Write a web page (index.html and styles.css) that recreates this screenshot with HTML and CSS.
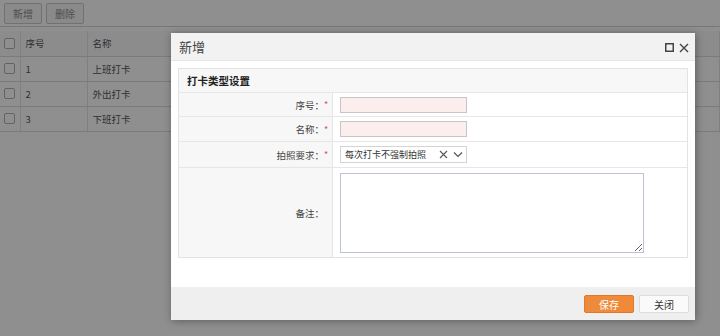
FILE: index.html
```html
<!DOCTYPE html>
<html lang="zh-CN">
<head>
    <meta charset="UTF-8">
    <title>打卡类型</title>
    <link rel="stylesheet" href="styles.css">
</head>
<body>
    <div class="page">
        <div class="toolbar">
            <button class="tool-btn">新增</button>
            <button class="tool-btn">删除</button>
        </div>
        <table class="grid">
            <tr class="grid-head">
                <td class="col-check"><span class="check"></span></td>
                <td class="col-no">序号</td>
                <td>名称</td>
            </tr>
            <tr>
                <td class="col-check"><span class="check"></span></td>
                <td class="col-no">1</td>
                <td>上班打卡</td>
            </tr>
            <tr>
                <td class="col-check"><span class="check"></span></td>
                <td class="col-no">2</td>
                <td>外出打卡</td>
            </tr>
            <tr>
                <td class="col-check"><span class="check"></span></td>
                <td class="col-no">3</td>
                <td>下班打卡</td>
            </tr>
        </table>
    </div>

    <div class="mask"></div>

    <div class="dialog">
        <div class="dialog-head">
            <span class="dialog-title">新增</span>
            <span class="dialog-tools">
                <svg width="9" height="9" viewBox="0 0 9 9"><rect x="0.75" y="0.75" width="7.5" height="7.5" fill="none" stroke="#444" stroke-width="1.5"/></svg>
                <svg width="10" height="10" viewBox="0 0 10 10"><path d="M1 1 L9 9 M9 1 L1 9" stroke="#444" stroke-width="1.4" fill="none"/></svg>
            </span>
        </div>
        <div class="dialog-body">
            <div class="panel">
                <div class="panel-title">打卡类型设置</div>
                <div class="form-row row-no">
                    <div class="form-label">序号：<i class="req">*</i></div>
                    <div class="form-field"><input class="text-input" type="text"></div>
                </div>
                <div class="form-row row-name">
                    <div class="form-label">名称：<i class="req">*</i></div>
                    <div class="form-field"><input class="text-input" type="text"></div>
                </div>
                <div class="form-row row-photo">
                    <div class="form-label">拍照要求：<i class="req">*</i></div>
                    <div class="form-field">
                        <div class="select">
                            <span class="select-text">每次打卡不强制拍照</span>
                            <svg class="select-clear" width="9" height="9" viewBox="0 0 9 9"><path d="M1 1 L8 8 M8 1 L1 8" stroke="#555" stroke-width="1.1" fill="none"/></svg>
                            <svg class="select-arrow" width="10" height="7" viewBox="0 0 10 7"><path d="M1 1.5 L5 5.5 L9 1.5" stroke="#555" stroke-width="1.2" fill="none"/></svg>
                        </div>
                    </div>
                </div>
                <div class="form-row row-note">
                    <div class="form-label">备注：<i class="req-blank"></i></div>
                    <div class="form-field"><textarea class="note"></textarea></div>
                </div>
            </div>
        </div>
        <div class="dialog-foot">
            <button class="btn btn-save">保存</button>
            <button class="btn btn-close">关闭</button>
        </div>
    </div>
</body>
</html>
```

FILE: styles.css
```css
* {
    box-sizing: border-box;
}
body {
    margin: 0;
    width: 720px;
    height: 336px;
    overflow: hidden;
    background: #fff;
    font-family: "Noto Sans CJK SC", "Liberation Sans", sans-serif;
    font-size: 11px;
    color: #333;
    position: relative;
}

/* background list page */
.toolbar {
    display: flex;
    gap: 4px;
    padding: 3px 4px;
    height: 27px;
    border-bottom: 1px solid #d4d4d4;
}
.tool-btn {
    width: 38px;
    height: 21px;
    padding: 0;
    border: 1px solid #c9c9c9;
    border-radius: 2px;
    background: #f7f7f7;
    font-family: inherit;
    font-size: 10px;
    color: #8a8a8a;
}
.grid {
    margin-top: 4px;
    width: 100%;
    border-collapse: collapse;
}
.grid td {
    height: 25px;
    border-bottom: 1px solid #dcdcdc;
    border-right: 1px solid #e4e4e4;
    padding: 0 5px;
    font-size: 9.5px;
    color: #555;
}
.grid-head td {
    background: #fafafa;
}
.grid .col-check {
    width: 20px;
    padding: 0 0 0 4px;
}
.grid .col-no {
    width: 67px;
}
.check {
    display: block;
    width: 11px;
    height: 11px;
    border: 1px solid #b0b0b0;
    border-radius: 2px;
    background: #fff;
}

.mask {
    position: absolute;
    inset: 0;
    background: rgba(0, 0, 0, 0.44);
}

/* dialog */
.dialog {
    position: absolute;
    left: 171px;
    top: 33px;
    width: 524px;
    height: 287px;
    background: #fff;
    display: flex;
    flex-direction: column;
    box-shadow: 1px 1px 8px rgba(0, 0, 0, 0.35);
}
.dialog-head {
    height: 28px;
    background: #f2f2f2;
    border-bottom: 1px solid #e8e8e8;
    display: flex;
    align-items: center;
    justify-content: space-between;
    padding: 0 6px 0 8px;
}
.dialog-title {
    font-size: 13px;
    color: #444;
}
.dialog-tools {
    display: flex;
    align-items: center;
    gap: 5px;
    padding-top: 2px;
}
.dialog-body {
    flex: 1;
    padding: 7px 7px 0;
}
.panel {
    border: 1px solid #e3e3e3;
}
.panel-title {
    height: 24px;
    line-height: 23px;
    padding-left: 8px;
    background: #f7f7f7;
    font-size: 10.5px;
    font-weight: bold;
    color: #222;
    border-bottom: 1px solid #e6e6e6;
}
.form-row {
    display: flex;
    border-bottom: 1px solid #e6e6e6;
}
.form-row:last-child {
    border-bottom: none;
}
.row-no { height: 24px; }
.row-name { height: 25px; }
.row-photo { height: 26px; }
.row-note { height: 89px; }
.form-label {
    width: 154px;
    background: #f7f7f7;
    border-right: 1px solid #e6e6e6;
    display: flex;
    align-items: center;
    justify-content: flex-end;
    padding-right: 2px;
    font-size: 9.5px;
    color: #444;
}
.req,
.req-blank {
    font-style: normal;
    color: #e05050;
    font-size: 9px;
    width: 6px;
    text-align: left;
}
.form-field {
    flex: 1;
    display: flex;
    align-items: center;
    padding-left: 7px;
}
.text-input {
    width: 127px;
    height: 16px;
    border: 1px solid #c6c6c6;
    background: #fdeeee;
    padding: 0;
}
.select {
    width: 127px;
    height: 17px;
    border: 1px solid #d4d4d4;
    background: #fff;
    display: flex;
    align-items: center;
    padding: 0 3px 0 4px;
}
.select-text {
    flex: 1;
    font-size: 9px;
    color: #333;
}
.select-clear {
    margin-right: 5px;
}
.note {
    width: 304px;
    height: 80px;
    margin-top: 1px;
    border: 1px solid #bcc3d3;
    background: #fff;
    resize: both;
}

.dialog-foot {
    height: 33px;
    background: #efefef;
    display: flex;
    align-items: center;
    justify-content: flex-end;
    gap: 5px;
    padding: 1px 6px 0 0;
}
.btn {
    width: 50px;
    height: 18px;
    padding: 0;
    border-radius: 2px;
    font-family: inherit;
    font-size: 10px;
}
.btn-save {
    background: #ef8a3a;
    border: 1px solid #e07a2a;
    color: #fff;
}
.btn-close {
    background: #fafafa;
    border: 1px solid #dcdcdc;
    color: #333;
}
```
